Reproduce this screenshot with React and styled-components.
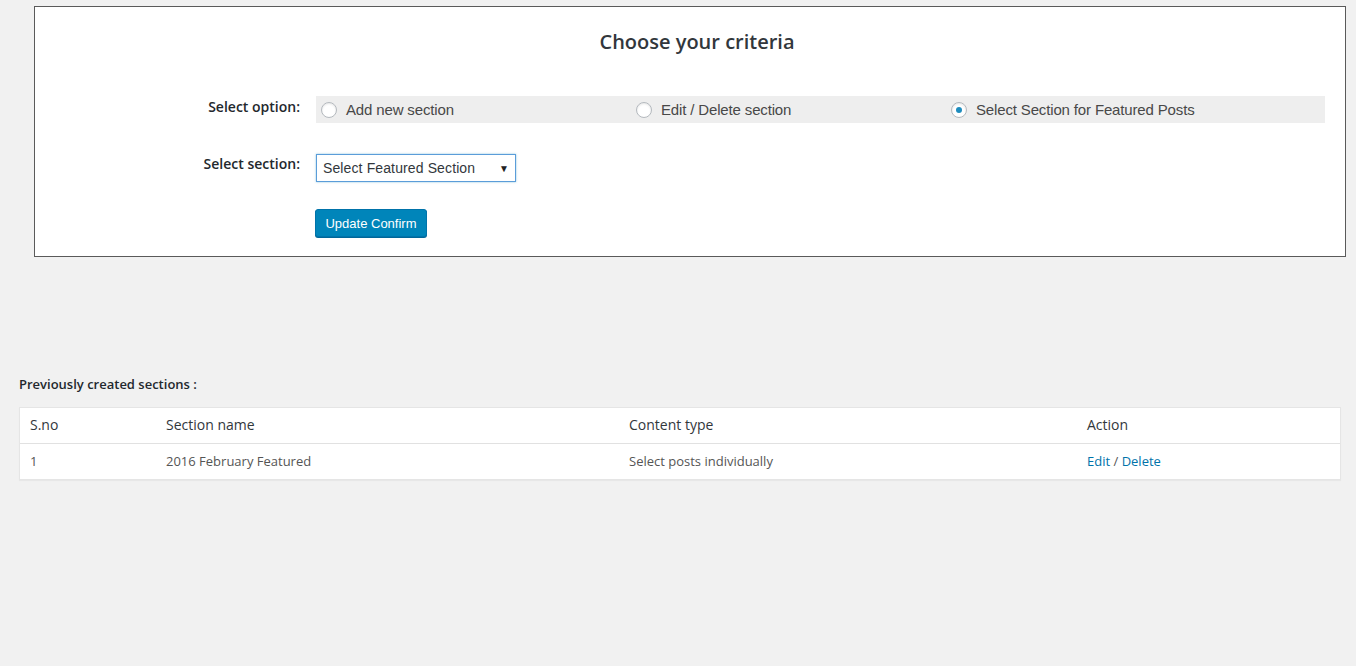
import React, { useState } from 'react'
import styled, { createGlobalStyle } from 'styled-components'

const GlobalStyle = createGlobalStyle`
  html, body {
    margin: 0;
    padding: 0;
    background: #f1f1f1;
    font-family: "Open Sans", "Liberation Sans", sans-serif;
    color: #23282d;
  }
`

const Page = styled.div`
  padding: 6px 0 0 0;
  min-height: 660px;
`

const CriteriaBox = styled.div`
  margin: 0 10px 0 34px;
  background: #fff;
  border: 1px solid #5a5a5a;
  padding: 21px 20px 19px 0;
`

const Title = styled.h2`
  margin: 0 0 40px;
  text-align: center;
  font-size: 20px;
  font-weight: 600;
  line-height: 28px;
  color: #32373c;
  padding-left: 34px;
`

const FormRow = styled.div`
  display: grid;
  grid-template-columns: 265px 1fr;
  column-gap: 16px;
  align-items: start;
  margin-bottom: ${p => p.$gap || 0}px;
`

const Label = styled.label`
  text-align: right;
  font-size: 14px;
  font-weight: 600;
  line-height: 20px;
  padding-top: ${p => p.$top || 0}px;
  color: #23282d;
`

const RadioBar = styled.div`
  display: grid;
  grid-template-columns: repeat(3, 315px);
  align-items: center;
  height: 27px;
  background: #eeeeee;
`

const RadioItem = styled.label`
  display: flex;
  align-items: center;
  gap: 9px;
  padding-left: 5px;
  font-family: "Liberation Sans", Arial, sans-serif;
  font-size: 15px;
  letter-spacing: -0.15px;
  color: #484848;
  cursor: pointer;
`

const RadioCircle = styled.span`
  width: 14px;
  height: 14px;
  border-radius: 50%;
  border: 1px solid #b4b9be;
  background: #fff;
  box-shadow: inset 0 1px 2px rgba(0, 0, 0, 0.1);
  display: flex;
  align-items: center;
  justify-content: center;
  flex-shrink: 0;

  &::after {
    content: '';
    width: 6px;
    height: 6px;
    border-radius: 50%;
    background: #1e8cbe;
    display: ${p => (p.$checked ? 'block' : 'none')};
  }
`

const SelectBox = styled.div`
  width: 186px;
  height: 26px;
  border: 1px solid #5b9dd9;
  box-shadow: 0 0 2px rgba(30, 140, 190, 0.5);
  background: #fff;
  display: flex;
  align-items: center;
  justify-content: space-between;
  padding: 0 6px;
  box-sizing: content-box;
  font-family: "Liberation Sans", Arial, sans-serif;
  font-size: 14px;
  letter-spacing: 0.12px;
  color: #32373c;
`

const Arrow = styled.span`
  font-size: 10px;
  color: #222;
`

const PrimaryButton = styled.button`
  width: 112px;
  height: 28px;
  padding: 0;
  margin-left: -1px;
  background: #0085ba;
  border: 1px solid #0073aa;
  border-radius: 3px;
  box-shadow: 0 1px 0 #006799;
  color: #fff;
  font-family: "Liberation Sans", Arial, sans-serif;
  font-size: 13px;
  cursor: pointer;
`

const Listing = styled.div`
  margin: 117px 15px 0 19px;
`

const ListTitle = styled.h3`
  margin: 0 0 13px;
  font-size: 13px;
  font-weight: 600;
  line-height: 20px;
  color: #23282d;
`

const Table = styled.div`
  background: #fff;
  border: 1px solid #e5e5e5;
  box-shadow: 0 1px 1px rgba(0, 0, 0, 0.04);
`

const TableRow = styled.div`
  display: grid;
  grid-template-columns: 136px 463px 458px 1fr;
  height: 35px;
  align-items: center;
  border-bottom: ${p => (p.$head ? '1px solid #e1e1e1' : 'none')};
`

const Cell = styled.div`
  padding-left: 10px;
  font-size: ${p => (p.$head ? 14 : 13)}px;
  color: ${p => (p.$head ? '#32373c' : '#555')};
  margin-top: ${p => (p.$head ? -2 : -1)}px;
`

const Link = styled.a`
  color: #0073aa;
  text-decoration: none;
`

const options = ['Add new section', 'Edit / Delete section', 'Select Section for Featured Posts']

export default function App() {
  const [choice, setChoice] = useState(2)

  return (
    <Page>
      <GlobalStyle />
      <CriteriaBox>
        <Title>Choose your criteria</Title>

        <FormRow $gap={31}>
          <Label $top={1}>Select option:</Label>
          <RadioBar>
            {options.map((o, i) => (
              <RadioItem key={o} onClick={() => setChoice(i)}>
                <RadioCircle $checked={choice === i} />
                {o}
              </RadioItem>
            ))}
          </RadioBar>
        </FormRow>

        <FormRow $gap={27}>
          <Label $top={0}>Select section:</Label>
          <SelectBox>
            Select Featured Section
            <Arrow>▼</Arrow>
          </SelectBox>
        </FormRow>

        <FormRow>
          <span />
          <div>
            <PrimaryButton>Update Confirm</PrimaryButton>
          </div>
        </FormRow>
      </CriteriaBox>

      <Listing>
        <ListTitle>Previously created sections :</ListTitle>
        <Table>
          <TableRow $head>
            <Cell $head>S.no</Cell>
            <Cell $head>Section name</Cell>
            <Cell $head>Content type</Cell>
            <Cell $head>Action</Cell>
          </TableRow>
          <TableRow>
            <Cell>1</Cell>
            <Cell>2016 February Featured</Cell>
            <Cell>Select posts individually</Cell>
            <Cell>
              <Link href="#">Edit</Link> / <Link href="#">Delete</Link>
            </Cell>
          </TableRow>
        </Table>
      </Listing>
    </Page>
  )
}
